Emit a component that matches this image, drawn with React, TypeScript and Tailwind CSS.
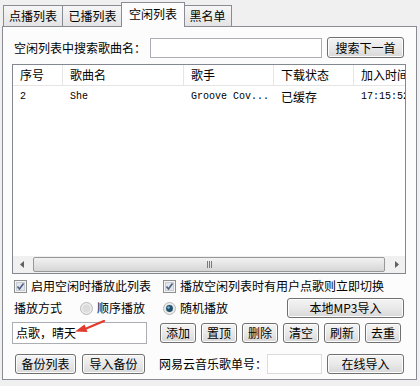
import React from "react"

const font = { fontFamily: '"Noto Sans CJK SC", "Liberation Sans", sans-serif' }
const mono = { fontFamily: '"Liberation Mono", monospace', fontSize: 10 }

function Btn({ children, className = "" }: { children: React.ReactNode; className?: string }) {
  return (
    <div
      className={
        "flex items-center justify-center whitespace-nowrap rounded-[3px] border border-[#707070] bg-gradient-to-b from-[#f4f4f4] via-[#e9e9e9] to-[#d8d8d8] text-[12px] leading-none text-black shadow-[inset_0_0_0_1px_#fcfcfc] " +
        className
      }
    >
      {children}
    </div>
  )
}

function Check({ label, className = "" }: { label: string; className?: string }) {
  return (
    <div className={"flex items-center whitespace-nowrap " + className}>
      <svg width="13" height="13" viewBox="0 0 13 13" className="shrink-0">
        <rect x="0.5" y="0.5" width="12" height="12" fill="#f4f4f4" stroke="#8e8f8f" />
        <rect x="2.5" y="2.5" width="8" height="8" fill="#e2e6ea" stroke="#c8ccd2" />
        <path d="M3.5 6.5 L5.5 9 L9.5 3.5" fill="none" stroke="#4a5f86" strokeWidth="1.6" />
      </svg>
      <span className="ml-[4px]">{label}</span>
    </div>
  )
}

function Radio({ label, on, className = "" }: { label: string; on?: boolean; className?: string }) {
  return (
    <div className={"flex items-center whitespace-nowrap " + className}>
      <svg width="13" height="13" viewBox="0 0 13 13" className="shrink-0">
        <circle cx="6.5" cy="6.5" r="6" fill="#ececec" stroke="#b8b8b8" />
        <circle cx="6.5" cy="6.5" r="4" fill="#dcdcdc" />
        {on && <circle cx="6.5" cy="6.5" r="3.4" fill="#1f4f6a" />}
        {on && <circle cx="5.6" cy="5.6" r="1.3" fill="#6fb3d8" />}
      </svg>
      <span className="ml-[4px]">{label}</span>
    </div>
  )
}

export default function App() {
  const cols = [
    { name: "序号", w: "w-[50px]" },
    { name: "歌曲名", w: "w-[121px]" },
    { name: "歌手", w: "w-[90px]" },
    { name: "下载状态", w: "w-[80px]" },
    { name: "加入时间", w: "w-[60px]" },
  ]

  return (
    <div className="relative h-[386px] w-[420px] overflow-hidden bg-[#f0f0f0] text-[12px] leading-none text-black" style={font}>
      {/* Tabs */}
      <div className="flex h-[26px] items-end whitespace-nowrap pl-[3px]">
        <div className="flex h-[21px] w-[60px] items-center justify-center border border-b-0 border-[#898c95] bg-gradient-to-b from-[#f6f6f6] to-[#e4e4e4]">点播列表</div>
        <div className="flex h-[21px] w-[60px] items-center justify-center border border-b-0 border-l-0 border-[#898c95] bg-gradient-to-b from-[#f6f6f6] to-[#e4e4e4]">已播列表</div>
        <div className="relative z-10 -mb-px -ml-[2px] flex h-[25px] w-[64px] items-center justify-center border border-b-0 border-[#898c95] bg-[#fcfcfc] pb-[2px]">空闲列表</div>
        <div className="-ml-[2px] flex h-[21px] w-[49px] items-center justify-center border border-b-0 border-[#898c95] bg-gradient-to-b from-[#f6f6f6] to-[#e4e4e4]">黑名单</div>
      </div>

      {/* Panel */}
      <div className="mx-[2px] h-[354px] w-[415px] whitespace-nowrap border border-[#898c95] bg-[#fcfcfc]">
        {/* Search row */}
        <div className="mt-[10px] flex h-[21px] items-center">
          <span className="ml-[11px] w-[136px]">空闲列表中搜索歌曲名：</span>
          <div className="h-[20px] w-[172px] border border-[#abadb3] bg-white" />
          <Btn className="ml-[5px] h-[21px] w-[77px]">搜索下一首</Btn>
        </div>

        {/* List */}
        <div className="ml-[9px] mt-[6px] flex h-[210px] w-[394px] flex-col overflow-hidden border border-[#828790] bg-white">
          <div className="flex h-[21px] shrink-0 items-center border-b border-[#e5e5e5]">
            {cols.map((c) => (
              <div key={c.name} className={"flex h-full shrink-0 items-center border-r border-[#e5e5e5] pl-[7px] " + c.w}>
                {c.name}
              </div>
            ))}
          </div>
          <div className="mt-[3px] flex h-[16px] shrink-0 items-center">
            <div className="w-[50px] shrink-0 pl-[7px]" style={mono}>2</div>
            <div className="w-[121px] shrink-0 pl-[7px]" style={mono}>She</div>
            <div className="w-[90px] shrink-0 pl-[7px]" style={mono}>Groove Cov...</div>
            <div className="w-[80px] shrink-0 pl-[7px]">已缓存</div>
            <div className="w-[60px] shrink-0 pl-[7px]" style={mono}>17:15:52</div>
          </div>
          <div className="flex-1" />
          {/* Horizontal scrollbar */}
          <div className="flex h-[17px] shrink-0 items-center bg-[#f0f0f0]">
            <div className="flex h-full w-[17px] items-center justify-center">
              <svg width="4" height="7" viewBox="0 0 4 7"><path d="M4 0 L0 3.5 L4 7 Z" fill="#606060" /></svg>
            </div>
            <div className="mx-[3px] flex h-[15px] flex-1 items-center justify-center rounded-[2px] border border-[#989898] bg-gradient-to-b from-[#f2f2f2] to-[#d6d6d6]">
              <div className="flex gap-[1px]">
                <div className="h-[7px] w-[1px] bg-[#7a7a7a]" />
                <div className="h-[7px] w-[1px] bg-[#7a7a7a]" />
                <div className="h-[7px] w-[1px] bg-[#7a7a7a]" />
              </div>
            </div>
            <div className="flex h-full w-[17px] items-center justify-center">
              <svg width="4" height="7" viewBox="0 0 4 7"><path d="M0 0 L4 3.5 L0 7 Z" fill="#606060" /></svg>
            </div>
          </div>
        </div>

        {/* Checkbox row */}
        <div className="mt-[5px] flex h-[14px] items-center">
          <Check label="启用空闲时播放此列表" className="ml-[11px] w-[149px]" />
          <Check label="播放空闲列表时有用户点歌则立即切换" />
        </div>

        {/* Radio row */}
        <div className="mt-[5px] flex h-[20px] items-center">
          <span className="ml-[11px] w-[66px]">播放方式</span>
          <Radio label="顺序播放" className="w-[83px]" />
          <Radio label="随机播放" on className="w-[124px]" />
          <Btn className="h-[20px] w-[117px]">本地MP3导入</Btn>
        </div>

        {/* Input + action buttons */}
        <div className="relative mt-[4px] flex h-[22px] items-center">
          <div className="ml-[9px] flex h-[22px] w-[135px] items-center border border-[#abadb3] bg-white pl-[3px]">点歌，晴天</div>
          <svg className="absolute left-[68px] top-[-2px]" width="36" height="16" viewBox="0 0 36 16">
            <path d="M33 1 L14 9" stroke="#e23b2e" strokeWidth="2.2" fill="none" strokeLinecap="round" />
            <path d="M4 11.5 L13.5 4.5 L16.5 12 Z" fill="#e23b2e" />
          </svg>
          <div className="ml-[13px] flex gap-[5px]">
            {["添加", "置顶", "删除", "清空", "刷新", "去重"].map((t) => (
              <Btn key={t} className="h-[20px] w-[36px]">{t}</Btn>
            ))}
          </div>
        </div>

        {/* Bottom row */}
        <div className="mt-[10px] flex h-[20px] items-center">
          <Btn className="ml-[12px] h-[20px] w-[61px]">备份列表</Btn>
          <Btn className="ml-[6px] h-[20px] w-[63px]">导入备份</Btn>
          <span className="ml-[14px] w-[108px] shrink-0">网易云音乐歌单号：</span>
          <div className="h-[20px] w-[55px] shrink-0 border border-[#dcdcdc] bg-white" />
          <Btn className="ml-[5px] h-[20px] w-[77px] shrink-0">在线导入</Btn>
        </div>
      </div>
    </div>
  )
}
